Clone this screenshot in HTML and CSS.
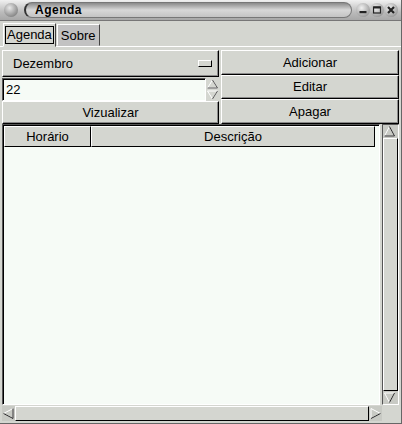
FILE: index.html
```html
<!DOCTYPE html>
<html lang="pt">
<head>
    <meta charset="UTF-8">
    <title>Agenda</title>
    <link rel="stylesheet" href="styles.css">
</head>
<body>
    <div class="window">
        <div class="titlebar">
            <span class="knob"></span>
            <div class="title-pill">Agenda</div>
            <span class="wbtn"><svg width="14" height="14" viewBox="0 0 14 14"><rect x="3.5" y="8" width="7" height="2.2" fill="#222"/></svg></span>
            <span class="wbtn"><svg width="14" height="14" viewBox="0 0 14 14"><rect x="3.5" y="4" width="7" height="6" fill="none" stroke="#222" stroke-width="1.2"/><rect x="3.5" y="3.5" width="7" height="2" fill="#222"/></svg></span>
            <span class="wbtn"><svg width="14" height="14" viewBox="0 0 14 14"><path d="M4 4 L10 10 M10 4 L4 10" stroke="#222" stroke-width="2.2"/></svg></span>
        </div>

        <div class="tabs">
            <div class="tab active"><span>Agenda</span></div>
            <div class="tab">Sobre</div>
        </div>

        <div class="panel">
            <div class="controls">
                <div class="col left">
                    <div class="combo">
                        <span>Dezembro</span>
                        <span class="combo-ind"></span>
                    </div>
                    <div class="spin">
                        <div class="entry">22</div>
                        <div class="arrows">
                            <svg width="13" height="22" viewBox="0 0 13 22">
                                <path d="M6.5 1 L1.5 9 L11.5 9 Z" fill="none" stroke="#fff" stroke-width="1"/>
                                <path d="M6.5 1 L11.5 9 L1.5 9" fill="none" stroke="#555"/>
                                <path d="M1.5 12 L11.5 12 L6.5 20 Z" fill="none" stroke="#fff" stroke-width="1"/>
                                <path d="M11.5 12 L6.5 20" stroke="#555"/>
                            </svg>
                        </div>
                    </div>
                    <div class="btn">Vizualizar</div>
                </div>
                <div class="col right">
                    <div class="btn">Adicionar</div>
                    <div class="btn">Editar</div>
                    <div class="btn">Apagar</div>
                </div>
            </div>

            <div class="list">
                <div class="list-row">
                    <div class="clist">
                        <div class="head">
                            <div class="hcell hora">Horário</div>
                            <div class="hcell desc">Descrição</div>
                        </div>
                        <div class="rows"></div>
                    </div>
                    <div class="vscroll">
                        <div class="sarrow">
                            <svg width="13" height="13" viewBox="0 0 13 13"><path d="M6.5 1.5 L1.5 11 L11.5 11 Z" fill="none" stroke="#fff"/><path d="M6.5 1.5 L11.5 11 L1.5 11" fill="none" stroke="#222"/></svg>
                        </div>
                        <div class="trough"><div class="thumb"></div></div>
                        <div class="sarrow">
                            <svg width="13" height="13" viewBox="0 0 13 13"><path d="M1.5 2 L11.5 2 L6.5 11.5 Z" fill="none" stroke="#fff"/><path d="M11.5 2 L6.5 11.5" fill="none" stroke="#222"/></svg>
                        </div>
                    </div>
                </div>
                <div class="hscroll">
                    <div class="sarrow h">
                        <svg width="13" height="13" viewBox="0 0 13 13"><path d="M1.5 6.5 L11 1.5 L11 11.5 Z" fill="none" stroke="#fff"/><path d="M1.5 6.5 L11 11.5 L11 1.5" fill="none" stroke="#222"/></svg>
                    </div>
                    <div class="htrough"><div class="hthumb"></div></div>
                    <div class="sarrow h">
                        <svg width="13" height="13" viewBox="0 0 13 13"><path d="M11.5 6.5 L2 1.5 L2 11.5 Z" fill="none" stroke="#fff"/><path d="M11.5 6.5 L2 11.5" fill="none" stroke="#222"/></svg>
                    </div>
                    <div class="corner"></div>
                </div>
            </div>
        </div>
    </div>
</body>
</html>
```

FILE: styles.css
```css
body {
    margin: 0;
    font-family: "Liberation Sans", Arial, sans-serif;
    font-size: 13px;
    color: #000;
    background: #d4d6d0;
}
.window {
    width: 402px;
    height: 424px;
    display: flex;
    flex-direction: column;
    background: #d4d6d0;
    box-sizing: border-box;
    border-right: 1px solid #666;
    border-bottom: 1px solid #666;
}
.titlebar {
    height: 20px;
    display: flex;
    align-items: center;
    padding: 0 3px 0 4px;
    background: linear-gradient(#f0f0f0, #bcbcbc 60%, #a8a8a8);
    border-bottom: 1px solid #777;
}
.knob {
    width: 14px;
    height: 14px;
    border-radius: 50%;
    background: radial-gradient(circle at 40% 35%, #e8e8e8, #8c8c8c 70%, #555);
    margin-right: 6px;
}
.title-pill {
    flex: 1;
    height: 14px;
    line-height: 14px;
    border-radius: 8px;
    padding-left: 9px;
    font-weight: bold;
    font-size: 12px;
    letter-spacing: 0.5px;
    background: linear-gradient(#8a8a8a, #d8d8d8 50%, #c4c4c4);
    border: 1px solid #777;
    border-left: 2px solid #333;
    margin-right: 4px;
}
.wbtn {
    width: 14px;
    height: 14px;
    border-radius: 50%;
    background: radial-gradient(circle at 40% 35%, #f0f0f0, #a0a0a0 70%, #666);
    display: flex;
}
.tabs {
    display: flex;
    align-items: flex-end;
    padding: 3px 0 0 3px;
    height: 22px;
    box-sizing: content-box;
}
.tab {
    height: 20px;
    padding: 0 3px;
    line-height: 21px;
    background: #c2c2c2;
    border: 1px solid;
    border-color: #fff #444 transparent #fff;
    margin-left: 1px;
}
.tab.active {
    background: #d4d6d0;
    height: 22px;
    padding: 0 1px;
    display: flex;
    align-items: center;
    position: relative;
    z-index: 1;
    margin-bottom: -1px;
    margin-left: 0;
}
.tab.active span {
    border: 1px solid #000;
    padding: 0 1px;
    line-height: 16px;
}
.panel {
    flex: 1;
    display: flex;
    flex-direction: column;
    border-top: 1px solid #fff;
    padding: 3px 2px 2px;
}
.controls {
    display: flex;
    gap: 2px;
}
.col {
    display: flex;
    flex-direction: column;
}
.col.left {
    width: 217px;
}
.col.right {
    flex: 1;
}
.btn, .combo {
    box-sizing: border-box;
    border: 1px solid;
    border-color: #fff #000 #000 #fff;
    box-shadow: inset -1px -1px 0 #8a8a8a;
    background: #d4d6d0;
    text-align: center;
}
.right .btn {
    height: 25px;
    line-height: 23px;
}
.right .btn:nth-child(2) {
    height: 24px;
    line-height: 22px;
}
.left .btn {
    height: 23px;
    line-height: 21px;
}
.combo {
    height: 27px;
    display: flex;
    align-items: center;
    justify-content: space-between;
    padding: 0 6px 0 10px;
    text-align: left;
}
.combo-ind {
    width: 12px;
    height: 5px;
    border: 1px solid;
    border-color: #fff #000 #000 #fff;
    background: #d4d6d0;
}
.spin {
    display: flex;
    height: 24px;
    padding-top: 1px;
    box-sizing: border-box;
}
.entry {
    flex: 1;
    background: #f6fbf6;
    border: 1px solid;
    border-color: #555 #fff #fff #555;
    box-shadow: inset 1px 1px 0 #000;
    padding-left: 3px;
    line-height: 21px;
}
.arrows {
    width: 13px;
    display: flex;
    align-items: center;
    background: #d4d6d0;
}
.list {
    flex: 1;
    display: flex;
    flex-direction: column;
}
.list-row {
    flex: 1;
    display: flex;
    gap: 2px;
}
.clist {
    flex: 1;
    display: flex;
    flex-direction: column;
    border: 1px solid;
    border-color: #555 #fff #fff #555;
    box-shadow: inset 1px 1px 0 #000;
    background: #f6fbf6;
    padding: 1px 0 0 1px;
}
.head {
    display: flex;
    height: 21px;
}
.hcell {
    box-sizing: border-box;
    border: 1px solid;
    border-color: #fff #000 #000 #fff;
    background: #d4d6d0;
    text-align: center;
    line-height: 19px;
}
.hora {
    width: 87px;
}
.desc {
    flex: 1;
    margin-right: 4px;
}
.rows {
    flex: 1;
}
.vscroll {
    width: 15px;
    display: flex;
    flex-direction: column;
    background: #c8cac4;
    border: 1px solid;
    border-color: #555 #fff #fff #555;
}
.sarrow {
    width: 13px;
    height: 13px;
    display: flex;
}
.trough {
    flex: 1;
    display: flex;
}
.thumb {
    flex: 1;
    border: 1px solid;
    border-color: #fff #000 #000 #fff;
    background: #d4d6d0;
}
.hscroll {
    display: flex;
    height: 15px;
    margin-top: 1px;
}
.hscroll .sarrow, .htrough {
    background: #c8cac4;
}
.sarrow.h {
    height: 15px;
    align-items: center;
}
.htrough {
    flex: 1;
    display: flex;
}
.hthumb {
    flex: 1;
    border: 1px solid;
    border-color: #fff #000 #000 #fff;
    background: #d4d6d0;
}
.corner {
    width: 17px;
    background: #d4d6d0;
}
```
